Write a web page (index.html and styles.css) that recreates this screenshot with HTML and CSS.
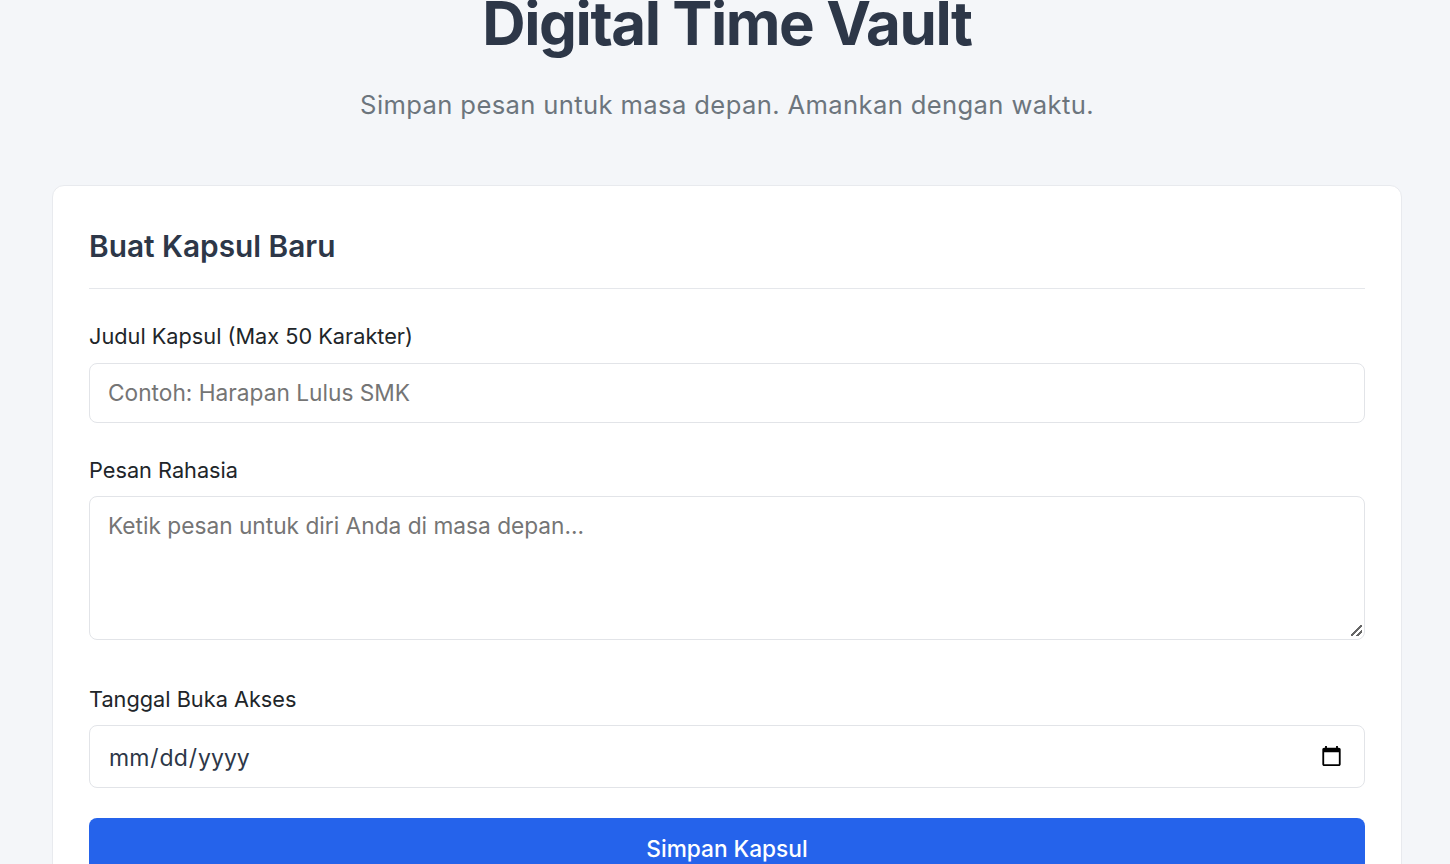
FILE: index.html
```html
<!DOCTYPE html>
<html lang="id">
<head>
  <meta charset="UTF-8" />
  <title>Digital Time Vault</title>
  <link rel="stylesheet" href="styles.css">
</head>
<body>
  <div class="container">
    <header class="page-header">
      <h1>Digital Time Vault</h1>
      <p>Simpan pesan untuk masa depan. Amankan dengan waktu.</p>
    </header>

    <section class="card">
      <h2>Buat Kapsul Baru</h2>
      <form>
        <div class="field field-title">
          <label for="title">Judul Kapsul (Max 50 Karakter)</label>
          <input type="text" id="title" maxlength="50" placeholder="Contoh: Harapan Lulus SMK" />
        </div>
        <div class="field field-message">
          <label for="message">Pesan Rahasia</label>
          <textarea id="message" rows="5" placeholder="Ketik pesan untuk diri Anda di masa depan..."></textarea>
        </div>
        <div class="field field-date">
          <label for="date">Tanggal Buka Akses</label>
          <input type="date" id="date" />
        </div>
        <button type="button">Simpan Kapsul</button>
      </form>
    </section>
  </div>
</body>
</html>
```

FILE: styles.css
```css
* {
  box-sizing: border-box;
}

html, body {
  height: 100%;
  overflow: hidden;
}

body {
  font-family: 'Inter', sans-serif;
  margin: 0;
  background-color: #f4f6f9;
  color: #2d3748;
}

.container {
  padding: 0 48px 0 52px;
}

.page-header {
  text-align: center;
  margin-top: -17px;
  margin-bottom: 62px;
}

.page-header h1 {
  font-size: 60px;
  font-weight: 700;
  line-height: 80px;
  letter-spacing: -1.42px;
  color: #2d3748;
  margin: 0 0 24px;
}

.page-header p {
  font-size: 25.6px;
  line-height: 36px;
  letter-spacing: 0.37px;
  color: #6c757d;
  margin: 0;
}

.card {
  background-color: #fff;
  border: 1px solid #e8eaee;
  border-radius: 12px;
  padding: 36px;
  height: 800px;
}

.card h2 {
  font-size: 29.8px;
  font-weight: 600;
  line-height: 48px;
  color: #2d3748;
  margin: 0 0 31px;
  padding-bottom: 18px;
  border-bottom: 1px solid #e5e7eb;
}

.field {
  margin-bottom: 31.5px;
}

.field-message {
  margin-bottom: 43px;
}

.field-date {
  margin-bottom: 30px;
}

.field label {
  display: block;
  font-size: 21.73px;
  font-weight: 400;
  line-height: 32px;
  margin-bottom: 10px;
  color: #212529;
}

.field-title label {
  margin-bottom: 10.5px;
}

input, textarea {
  display: block;
  width: 100%;
  height: 60px;
  font-family: inherit;
  font-size: 22.7px;
  color: #2d3748;
  background-color: #fff;
  border: 1px solid #e2e4e8;
  border-radius: 8px;
  padding: 16px 18px;
}

input::placeholder, textarea::placeholder {
  color: #757575;
}

textarea {
  height: 144px;
  padding-top: 15px;
}

textarea::-webkit-resizer {
  background: linear-gradient(135deg, transparent 44%, #666 44%, #666 56%, transparent 56%, transparent 71%, #666 71%, #666 83%, transparent 83%) 2px 1px / 11px 11px no-repeat;
}

input[type="date"] {
  height: 63px;
  font-size: 23px;
  padding: 18px 19px 16px 18px;
}

input[type="date"]::-webkit-calendar-picker-indicator {
  transform: translateY(-1px);
}

button {
  display: block;
  width: 100%;
  height: 60px;
  font-family: inherit;
  font-size: 22.7px;
  font-weight: 500;
  color: #fff;
  background-color: #2563eb;
  border: none;
  border-radius: 8px;
  cursor: pointer;
}
```
